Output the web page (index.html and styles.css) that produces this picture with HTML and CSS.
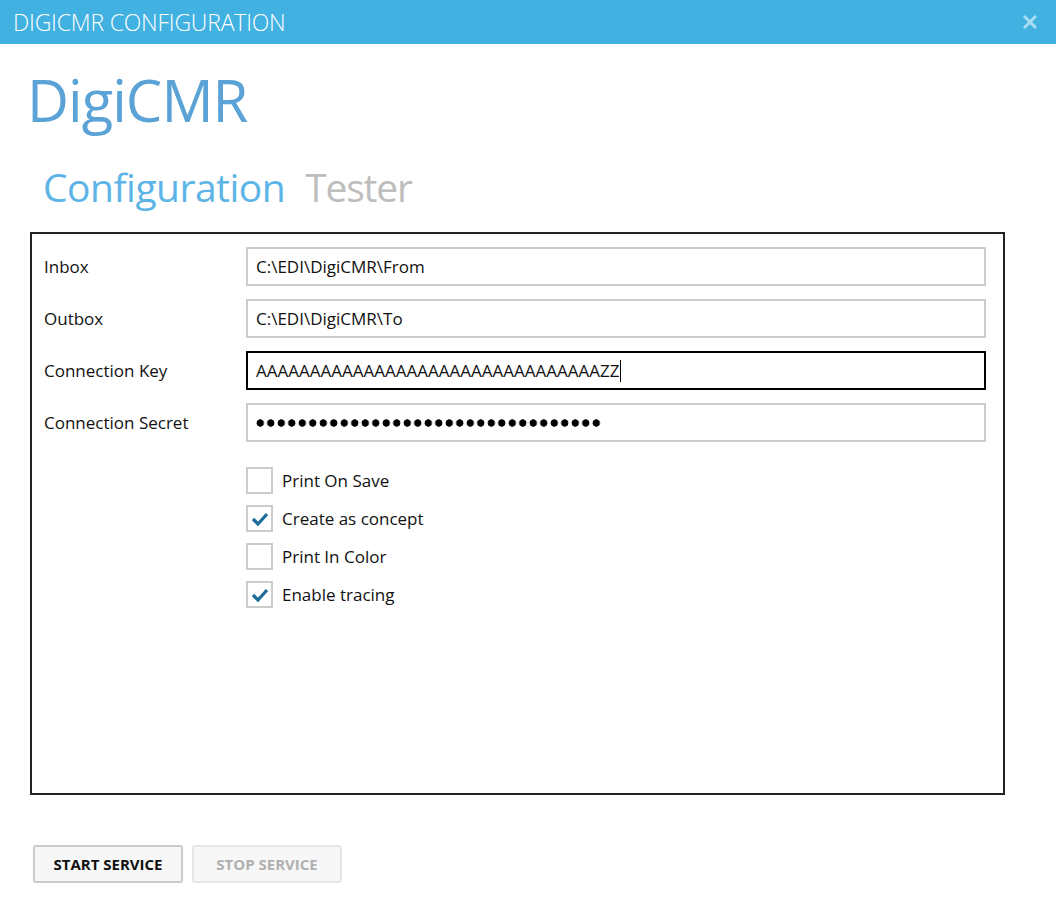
FILE: index.html
```html
<!DOCTYPE html>
<html lang="en">
<head>
    <meta charset="UTF-8">
    <meta name="viewport" content="width=device-width, initial-scale=1.0">
    <title>DigiCMR Configuration</title>
    <link rel="stylesheet" href="styles.css">
</head>
<body>
    <div class="titlebar">
        <span class="title">DIGICMR CONFIGURATION</span>
        <span class="close">
            <svg width="14" height="14" viewBox="0 0 14 14"><path d="M1 1 L13 13 M13 1 L1 13" stroke="#a9dbf3" stroke-width="3"/></svg>
        </span>
    </div>

    <div class="main">
        <h1 class="logo">DigiCMR</h1>

        <div class="tabs">
            <span class="tab active">Configuration</span>
            <span class="tab">Tester</span>
        </div>

        <div class="panel">
            <div class="row">
                <label>Inbox</label>
                <div class="field">C:\EDI\DigiCMR\From</div>
            </div>
            <div class="row">
                <label>Outbox</label>
                <div class="field">C:\EDI\DigiCMR\To</div>
            </div>
            <div class="row">
                <label>Connection Key</label>
                <div class="field focused">AAAAAAAAAAAAAAAAAAAAAAAAAAAAAAAAZZ<span class="caret"></span></div>
            </div>
            <div class="row">
                <label>Connection Secret</label>
                <div class="field"><span class="dots"></span></div>
            </div>

            <div class="checks">
                <div class="check"><span class="box"></span>Print On Save</div>
                <div class="check"><span class="box"><svg width="18" height="14" viewBox="0 0 18 14"><path d="M2 7 L7 12 L16 2" fill="none" stroke="#1c6c9c" stroke-width="3.2"/></svg></span>Create as concept</div>
                <div class="check"><span class="box"></span>Print In Color</div>
                <div class="check"><span class="box"><svg width="18" height="14" viewBox="0 0 18 14"><path d="M2 7 L7 12 L16 2" fill="none" stroke="#1c6c9c" stroke-width="3.2"/></svg></span>Enable tracing</div>
            </div>
        </div>

        <div class="actions">
            <button class="btn">START SERVICE</button>
            <button class="btn" disabled>STOP SERVICE</button>
        </div>
    </div>
</body>
</html>
```

FILE: styles.css
```css
body {
    margin: 0;
    padding: 0;
    background-color: #ffffff;
    font-family: "Open Sans", "Noto Sans", sans-serif;
    color: #111111;
}

.titlebar {
    height: 44px;
    background-color: #41b1e1;
    display: flex;
    align-items: center;
    justify-content: space-between;
    padding: 0 19px 0 13px;
}

.title {
    color: #ffffff;
    font-size: 23px;
    font-weight: 300;
    letter-spacing: -0.2px;
}

.close {
    display: flex;
}

.main {
    padding: 0 51px 0 30px;
}

.logo {
    margin: 0 0 0 -3px;
    padding-top: 20px;
    font-size: 58px;
    font-weight: 400;
    color: #5ba3d6;
    line-height: 72px;
    letter-spacing: -1px;
}

.tabs {
    display: flex;
    gap: 20px;
    padding: 27px 0 0 13px;
    height: 56px;
}

.tab {
    font-size: 39px;
    line-height: 48px;
    color: #bdbdbd;
    letter-spacing: -1.2px;
}

.tab.active {
    color: #5db4e6;
    letter-spacing: -0.5px;
}

.panel {
    border: 2px solid #222222;
    height: 563px;
    margin-top: 13px;
    padding: 13px 17px 0 12px;
    box-sizing: border-box;
}

.row {
    display: flex;
    align-items: center;
    margin-bottom: 13px;
}

.row label {
    width: 202px;
    font-size: 17px;
    flex-shrink: 0;
}

.field {
    flex: 1;
    height: 39px;
    border: 2px solid #cccccc;
    box-sizing: border-box;
    display: flex;
    align-items: center;
    padding-left: 8px;
    font-size: 17px;
}

.field.focused {
    border-color: #000000;
}

.caret {
    display: inline-block;
    width: 1px;
    height: 22px;
    background-color: #000000;
    margin-left: 1px;
}

.dots {
    display: inline-block;
    width: 347px;
    height: 10px;
    background: radial-gradient(circle, #000000 3.4px, transparent 4px) 0 0 / 10.5px 10px repeat-x;
    margin-left: -1px;
}

.checks {
    padding: 12px 0 0 202px;
    display: flex;
    flex-direction: column;
    gap: 11px;
}

.check {
    display: flex;
    align-items: center;
    font-size: 17px;
    height: 27px;
}

.box {
    width: 27px;
    height: 27px;
    border: 2px solid #cccccc;
    box-sizing: border-box;
    margin-right: 9px;
    display: flex;
    align-items: center;
    justify-content: center;
}

.actions {
    display: flex;
    gap: 9px;
    padding: 50px 0 0 3px;
}

.btn {
    width: 150px;
    height: 38px;
    font-family: "Open Sans", "Noto Sans", sans-serif;
    font-size: 15px;
    font-weight: 700;
    color: #111111;
    background-color: #f7f7f7;
    border: 2px solid #cccccc;
    border-radius: 3px;
    cursor: pointer;
}

.btn:disabled {
    color: #b0b0b0;
    border-color: #e6e6e6;
    cursor: default;
}
```
